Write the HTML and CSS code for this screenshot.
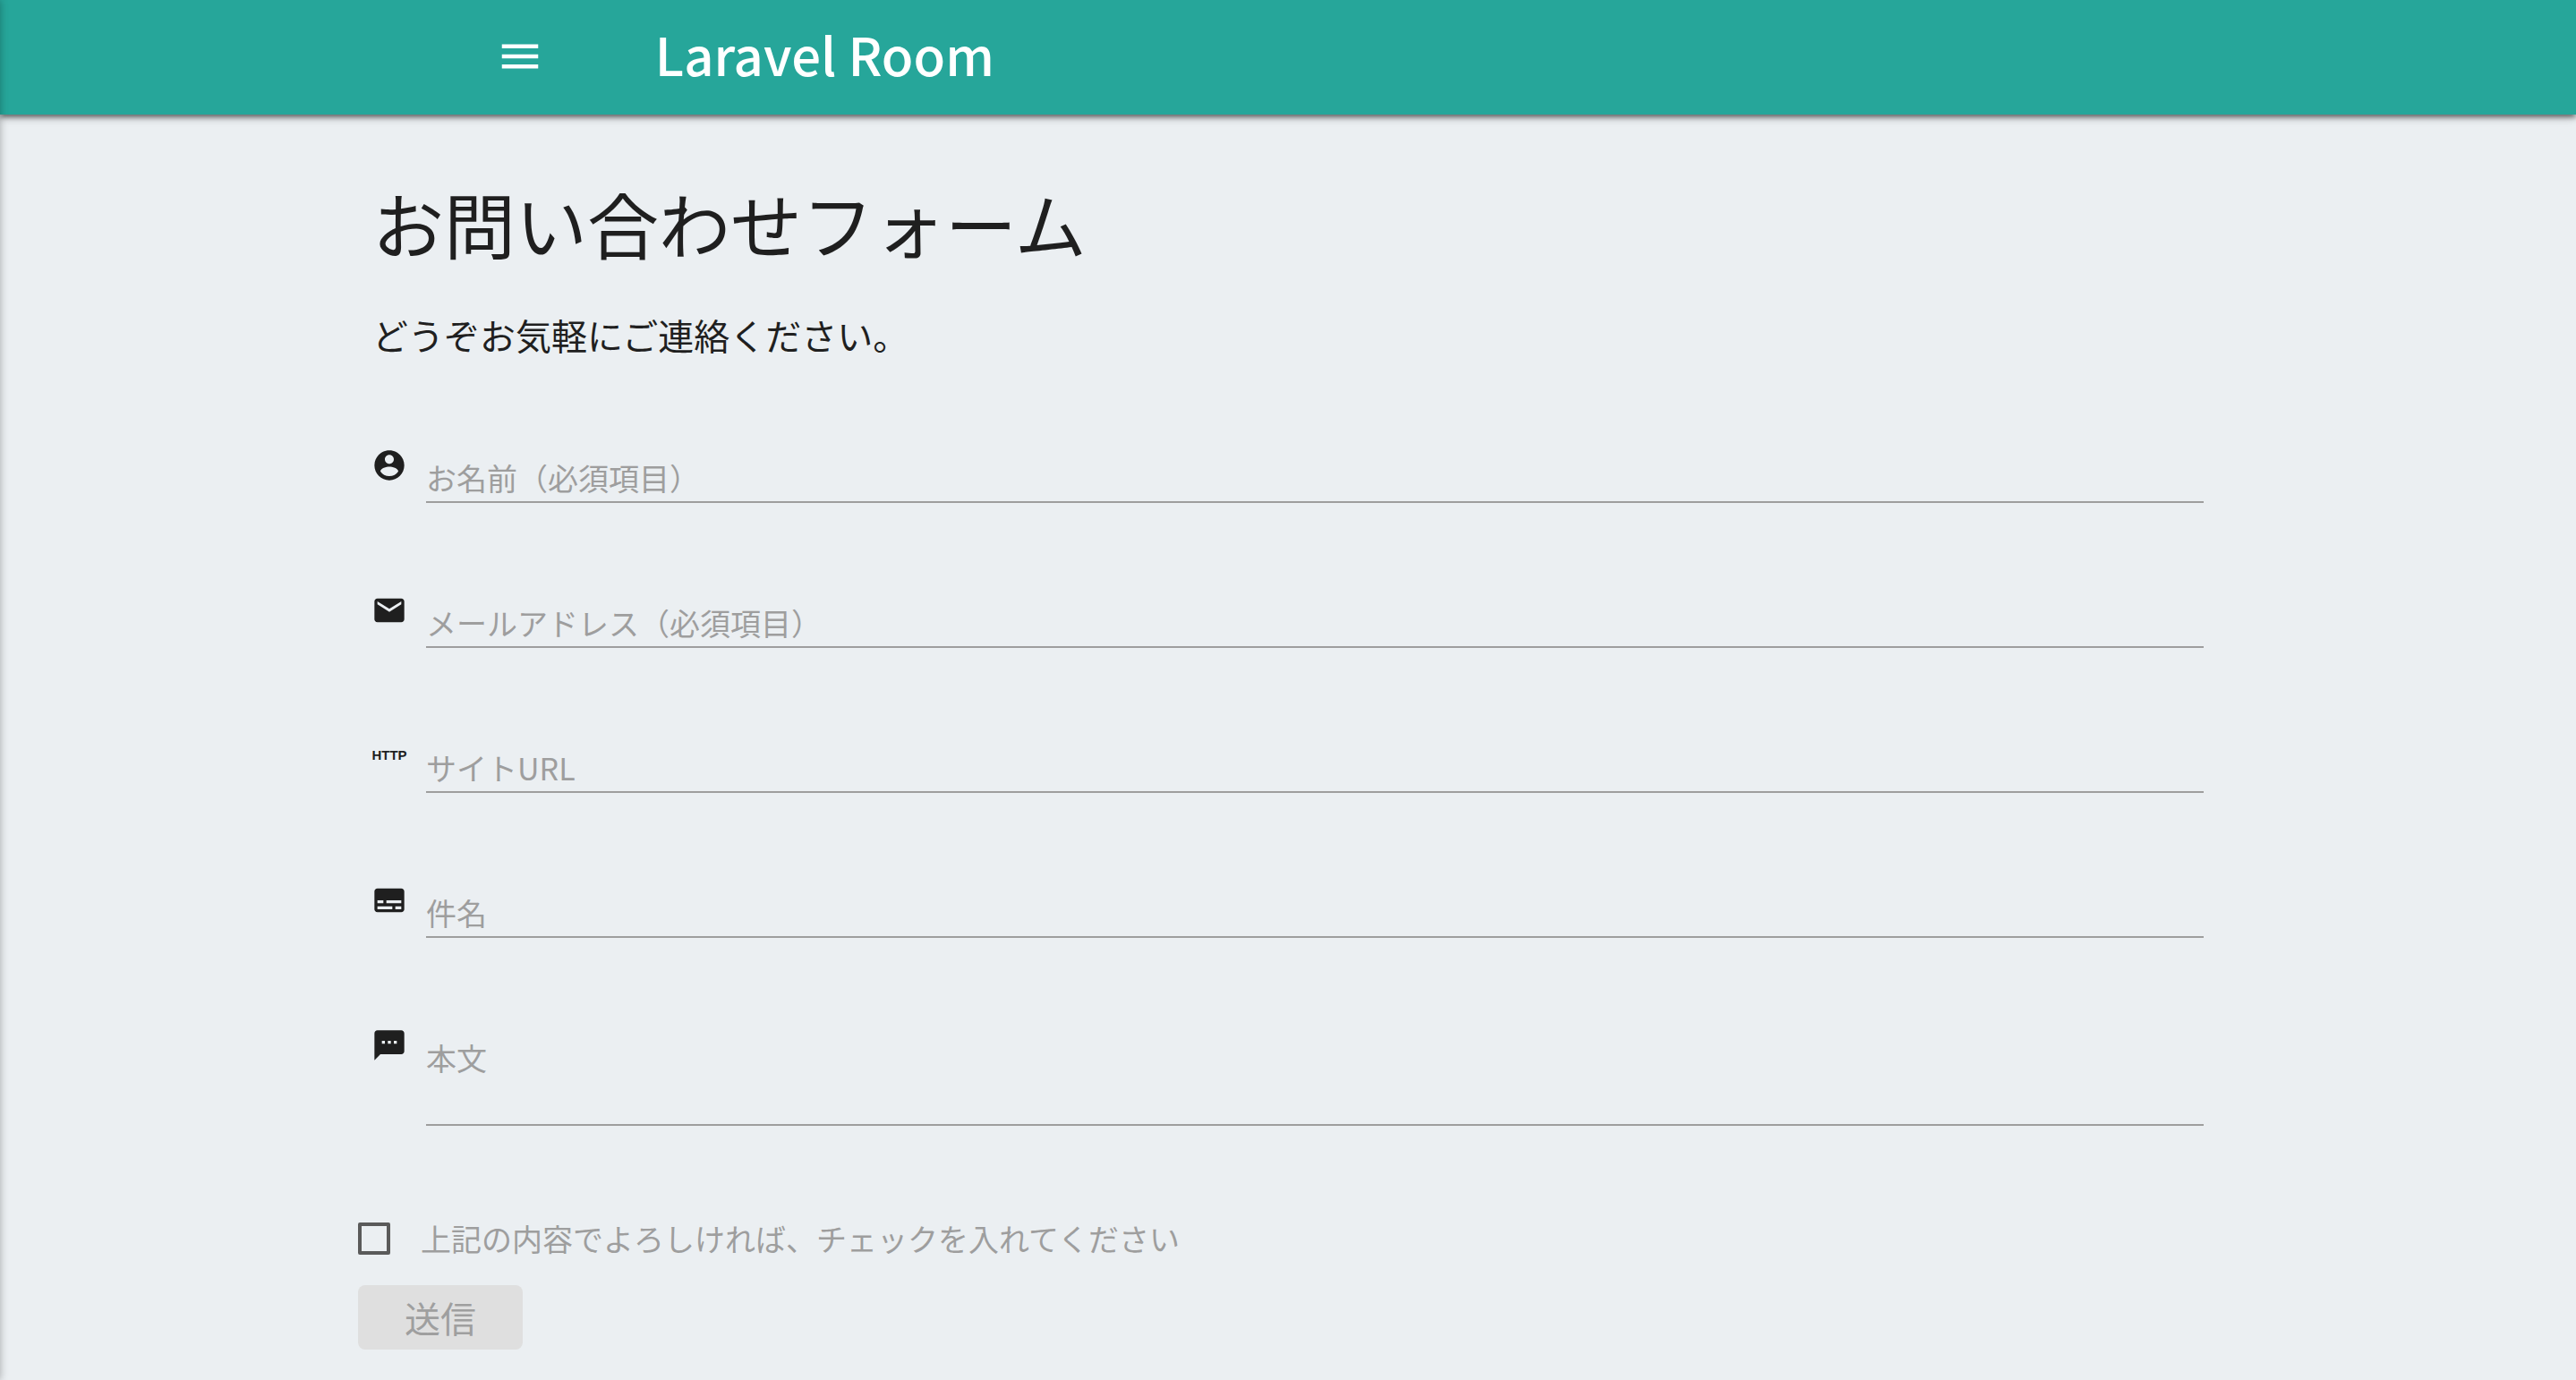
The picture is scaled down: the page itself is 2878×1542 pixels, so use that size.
FILE: index.html
```html
<!DOCTYPE html>
<html lang="ja">
<head>
<meta charset="utf-8">
<meta name="viewport" content="width=device-width, initial-scale=1">
<title>お問い合わせフォーム | Laravel Room</title>
<link rel="stylesheet" href="styles.css">
</head>
<body>
<header class="navbar">
  <div class="navbar-inner">
    <button class="menu-button" type="button" aria-label="メニュー">
      <svg class="menu-icon" viewBox="0 0 24 24" aria-hidden="true"><path d="M3 18h18v-2H3v2zm0-5h18v-2H3v2zm0-7v2h18V6H3z"/></svg>
    </button>
    <a class="brand" href="#">Laravel Room</a>
  </div>
</header>
<main class="container">
  <h1 class="title">お問い合わせフォーム</h1>
  <p class="lead">どうぞお気軽にご連絡ください。</p>
  <form class="contact-form">
    <div class="field">
      <svg class="icon" viewBox="0 0 24 24" aria-hidden="true"><path d="M12 2C6.480 2 2 6.480 2 12s4.480 10 10 10 10-4.480 10-10S17.520 2 12 2zm0 3c1.660 0 3 1.340 3 3s-1.340 3-3 3-3-1.340-3-3 1.340-3 3-3zm0 14.200c-2.500 0-4.710-1.280-6-3.220.030-1.990 4-3.080 6-3.080 1.990 0 5.970 1.090 6 3.080-1.290 1.940-3.500 3.220-6 3.220z"/></svg>
      <label class="field-label" for="name">お名前（必須項目）</label>
      <input class="control" id="name" type="text">
    </div>
    <div class="field">
      <svg class="icon" viewBox="0 0 24 24" aria-hidden="true"><path d="M20 4H4c-1.100 0-1.990.9-1.990 2L2 18c0 1.100.9 2 2 2h16c1.100 0 2-.9 2-2V6c0-1.100-.9-2-2-2zm0 4l-8 5-8-5V6l8 5 8-5v2z"/></svg>
      <label class="field-label" for="email">メールアドレス（必須項目）</label>
      <input class="control" id="email" type="email">
    </div>
    <div class="field">
      <span class="icon icon-text" aria-hidden="true">HTTP</span>
      <label class="field-label" for="site">サイトURL</label>
      <input class="control" id="site" type="url">
    </div>
    <div class="field">
      <svg class="icon" viewBox="0 0 24 24" aria-hidden="true"><path d="M20 4H4c-1.100 0-2 .9-2 2v12c0 1.100.9 2 2 2h16c1.100 0 2-.9 2-2V6c0-1.100-.9-2-2-2zM4 12h4v2H4v-2zm10 6H4v-2h10v2zm6 0h-4v-2h4v2zm0-4H10v-2h10v2z"/></svg>
      <label class="field-label" for="subject">件名</label>
      <input class="control" id="subject" type="text">
    </div>
    <div class="field">
      <svg class="icon" viewBox="0 0 24 24" aria-hidden="true"><path d="M20 2H4c-1.100 0-1.990.9-1.990 2L2 22l4-4h14c1.100 0 2-.9 2-2V4c0-1.100-.9-2-2-2zM9 11H7V9h2v2zm4 0h-2V9h2v2zm4 0h-2V9h2v2z"/></svg>
      <label class="field-label" for="body">本文</label>
      <textarea class="control control-area" id="body"></textarea>
    </div>
    <div class="confirm">
      <input class="checkbox" id="confirm" type="checkbox">
      <label class="confirm-label" for="confirm">上記の内容でよろしければ、チェックを入れてください</label>
    </div>
    <button class="submit" type="submit" disabled>送信</button>
  </form>
</main>
</body>
</html>
```
FILE: styles.css
```css
:root {
  --teal: #26a69a;
  --page: #ebeff2;
  --ink: #1f1f1f;
  --muted: #9e9e9e;
  --depth: 0 4px 4px 0 rgba(0, 0, 0, .24), 0 6px 2px -4px rgba(0, 0, 0, .12), 0 2px 10px 0 rgba(0, 0, 0, .4);
}

* { box-sizing: border-box; }

body {
  margin: 0;
  background: var(--page);
  color: var(--ink);
  font-family: "Noto Sans CJK JP", sans-serif;
}

/* Edge shadow of the closed side drawer */
body::before {
  content: "";
  position: fixed;
  top: 0;
  bottom: 0;
  left: -20px;
  width: 20px;
  z-index: 1;
  box-shadow: 0 0 10px rgba(0, 0, 0, .3);
}

.navbar {
  padding-bottom: 2px;
  background: var(--teal);
  box-shadow: var(--depth);
}

.navbar-inner {
  display: flex;
  align-items: center;
  gap: 124px;
  width: 62%;
  height: 126px;
  margin: 0 auto;
}

.menu-button {
  display: flex;
  margin: 0 0 0 7px;
  padding: 0;
  border: 0;
  background: none;
  color: #fff;
}

.menu-icon {
  width: 54px;
  height: 54px;
  fill: currentColor;
}

.brand {
  align-self: flex-start;
  color: #fff;
  font-size: 58px;
  font-weight: 500;
  line-height: 120px;
  text-decoration: none;
}

.container {
  width: 72.2%;
  margin: 0 auto;
  padding: 64px 0 32px;
}

.title {
  margin: 0;
  padding: 0 16px;
  font-size: 80px;
  font-weight: 400;
  line-height: 112px;
}

.lead {
  margin: 40px 0 0;
  padding: 0 16px;
  font-size: 40px;
  line-height: 60px;
}

.contact-form { padding-top: 94px; }

.field {
  display: grid;
  grid-template-columns: 40px 1fr;
  column-gap: 21px;
  align-items: start;
  margin-bottom: 98px;
  padding: 0 16px 0 15px;
}

.icon {
  width: 40px;
  height: 40px;
  margin-top: 2px;
  fill: currentColor;
}

.icon-text {
  font: 700 15px/40px "Liberation Sans", sans-serif;
  text-align: center;
}

/* The label rests on top of its empty control */
.field-label,
.control {
  grid-row: 1;
  grid-column: 2;
}

.field-label {
  padding-top: 12px;
  color: var(--muted);
  font-size: 34px;
  line-height: 48px;
  pointer-events: none;
}

.control {
  width: 100%;
  height: 64px;
  margin: 0;
  padding: 12px 0 0;
  border: 0;
  border-bottom: 2px solid var(--muted);
  border-radius: 0;
  outline: 0;
  background: none;
  color: inherit;
  font: inherit;
  font-size: 34px;
}

.control-area {
  display: block;
  height: 112px;
  resize: none;
}

.confirm {
  display: flex;
  align-items: center;
  gap: 34px;
  margin-top: -2px;
}

.checkbox {
  appearance: none;
  width: 36px;
  height: 36px;
  margin: 0;
  border: 4px solid #5a5a5a;
  border-radius: 2px;
}

.checkbox:checked { background: var(--teal); }

.confirm-label {
  color: var(--muted);
  font-size: 34px;
  line-height: 60px;
}

.submit {
  display: block;
  height: 72px;
  margin-top: 22px;
  padding: 0 52px;
  border: 0;
  border-radius: 8px;
  background: #dfdfdf;
  color: #9f9f9f;
  font-family: inherit;
  font-size: 40px;
  line-height: 68px;
}
```
